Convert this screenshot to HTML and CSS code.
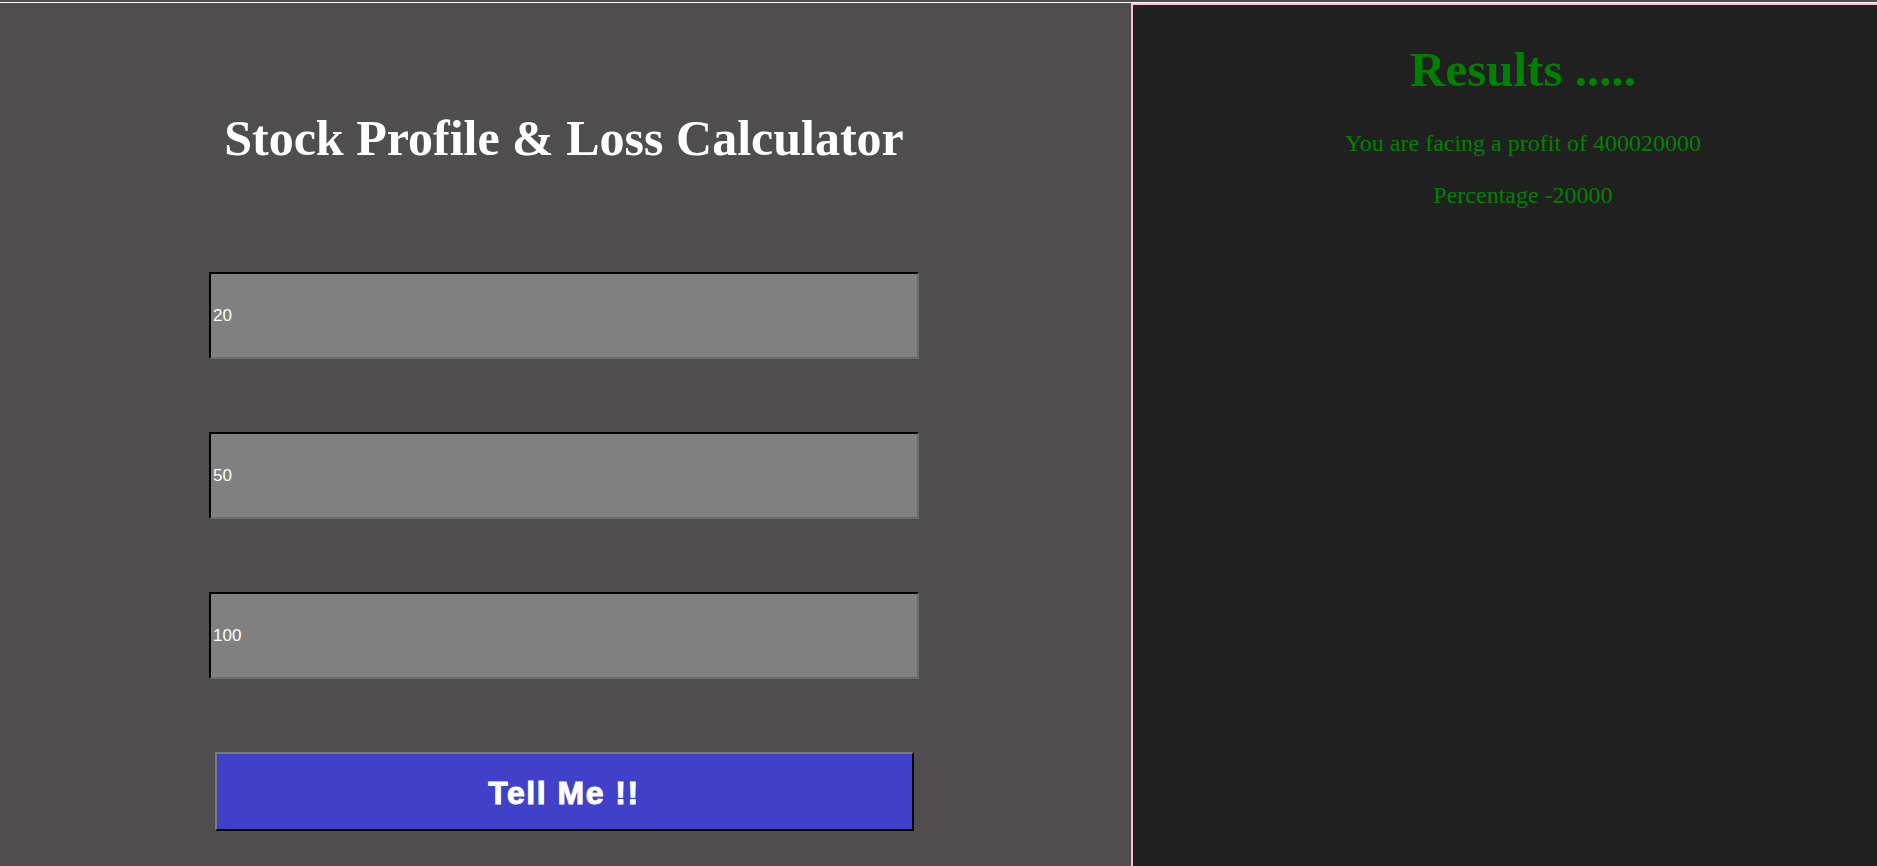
FILE: index.html
```html
<!DOCTYPE html>
<html lang="en">
<head>
<meta charset="utf-8">
<title>Stock Profit &amp; Loss Calculator</title>
<link rel="stylesheet" href="styles.css">
</head>
<body>
<div class="page">
  <section class="calc">
    <h1 class="title">Stock Profile &amp; Loss Calculator</h1>
    <div class="form">
      <input class="field" type="text" value="20">
      <input class="field" type="text" value="50">
      <input class="field" type="text" value="100">
      <button class="tell" type="button">Tell Me !!</button>
    </div>
  </section>
  <section class="results">
    <h1 class="results-title">Results .....</h1>
    <p class="line first">You are facing a profit of 400020000</p>
    <p class="line">Percentage -20000</p>
  </section>
</div>
</body>
</html>
```
FILE: styles.css
```css
html, body {
  margin: 0;
  padding: 0;
  height: 100%;
}
body {
  background: #4f4d4e;
  padding-top: 2px;
  box-sizing: border-box;
  overflow: hidden;
}
.page {
  display: flex;
  border-top: 1px solid #ffffff;
  height: 100%;
  box-sizing: border-box;
}
.calc {
  width: 1131px;
  flex: none;
  box-sizing: border-box;
  padding-right: 3px;
  background: #4f4d4e;
  display: flex;
  flex-direction: column;
  align-items: center;
}
.title {
  margin: 106px 0 0 0;
  font-family: "Liberation Serif", "Times New Roman", serif;
  font-weight: bold;
  font-size: 50px;
  color: #ffffff;
  line-height: normal;
}
.form {
  margin-top: 105px;
  display: flex;
  flex-direction: column;
  align-items: center;
  gap: 73px;
}
.field {
  box-sizing: border-box;
  width: 710px;
  height: 87px;
  margin: 0;
  padding: 1px 2px;
  background: #808080;
  border: 2px inset #767676;
  border-top-color: #1f1f1f;
  border-left-color: #1f1f1f;
  border-right-color: #6b6b6b;
  border-bottom-color: #6b6b6b;
  color: #ffffff;
  font-family: "Liberation Sans", Arial, sans-serif;
  font-size: 17px;
  outline: none;
}
.tell {
  box-sizing: border-box;
  width: 699px;
  height: 79px;
  margin: 0;
  padding: 4px 0 0 0;
  background: #4140c8;
  border: 2px outset #777777;
  border-top-color: #7a7a7a;
  border-left-color: #7a7a7a;
  border-right-color: #1f1f1f;
  border-bottom-color: #1f1f1f;
  color: #ffffff;
  font-family: "Liberation Sans", Arial, sans-serif;
  font-weight: bold;
  font-size: 32px;
  letter-spacing: 1.5px;
  -webkit-text-stroke: 1px #ffffff;
  cursor: pointer;
}
.results {
  flex: 1;
  background: #202020;
  border-top: 2px solid #ffc0cb;
  border-left: 2px solid #ffc0cb;
  padding-left: 36px;
  text-align: center;
  font-family: "Liberation Serif", "Times New Roman", serif;
  color: #008000;
}
.results-title {
  margin: 36px 0 0 0;
  font-size: 49px;
  font-weight: bold;
  line-height: normal;
}
.line {
  margin: 24px 0 0 0;
  font-size: 24px;
  line-height: 28px;
}
.line.first {
  margin-top: 31px;
}
```
